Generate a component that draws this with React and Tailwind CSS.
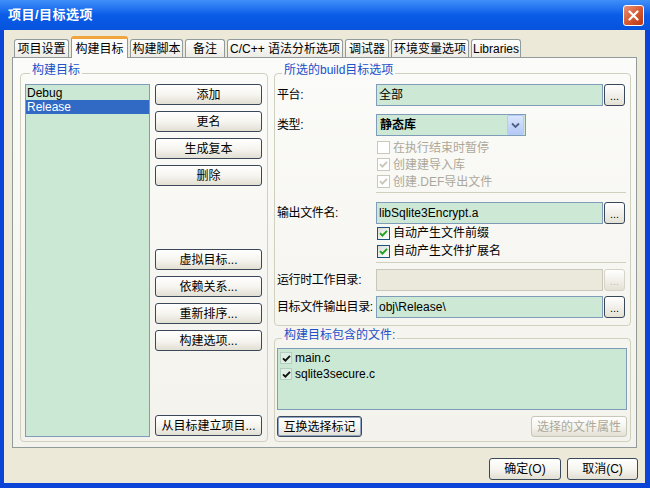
import React from "react";

const tabs = [
  { label: "项目设置", w: "w-[55px]" },
  { label: "构建目标", w: "w-[57px]", active: true },
  { label: "构建脚本", w: "w-[53px]" },
  { label: "备注", w: "w-[40px]" },
  { label: "C/C++ 语法分析选项", w: "w-[116px]" },
  { label: "调试器", w: "w-[44px]" },
  { label: "环境变量选项", w: "w-[78px]" },
  { label: "Libraries", w: "w-[50px]" },
];

const Btn = ({ children, className = "", disabled, isDefault }) => (
  <button
    className={`h-[21px] rounded-[3px] border text-[12px] leading-none flex items-center justify-center bg-linear-to-b from-white via-[#f6f5f0] to-[#e2dfd3] ${
      disabled ? "border-[#c9c7ba] text-[#aca899]" : "border-[#3a4859] text-black"
    } ${isDefault ? "ring-1 ring-inset ring-[#8ea4c4]" : ""} ${className}`}
  >
    {children}
  </button>
);

const Browse = ({ disabled }) => (
  <button
    className={`ml-[1px] w-[21px] h-[22px] rounded-[3px] border flex items-end justify-center pb-[3px] text-[11px] leading-none bg-linear-to-b from-white to-[#e4e1d5] ${
      disabled ? "border-[#d6d4c8] text-[#c0bfb2]" : "border-[#3a4859] text-black"
    }`}
  >
    ...
  </button>
);

const Check = ({ checked, disabled }) => (
  <span
    className={`w-[13px] h-[13px] shrink-0 border flex items-center justify-center ${
      disabled
        ? "border-[#cac8bb] bg-white"
        : "border-[#1c5180] bg-linear-to-br from-[#dcdcd7] to-white"
    }`}
  >
    {checked && (
      <svg width="9" height="9" viewBox="0 0 9 9">
        <path
          d="M1 4.2 L3.4 6.6 L8 1.8"
          fill="none"
          stroke={disabled ? "#c9c7ba" : "#21a121"}
          strokeWidth="1.9"
        />
      </svg>
    )}
  </span>
);

const CheckRow = ({ label, checked, disabled, h }) => (
  <div className={`flex items-center gap-[3px] ml-[100px] ${h}`}>
    <Check checked={checked} disabled={disabled} />
    <span className={disabled ? "text-[#aca899]" : "text-black"}>{label}</span>
  </div>
);

const Row = ({ label, children, className = "" }) => (
  <div className={`flex items-center h-[22px] ${className}`}>
    <span className="w-[99px] shrink-0 whitespace-nowrap tracking-[-0.4px]">{label}</span>
    {children}
  </div>
);

const Field = ({ value, disabled }) => (
  <div
    className={`w-[227px] h-[22px] border flex items-center px-[2px] ${
      disabled ? "bg-[#ebe9dc] border-[#c9c7ba]" : "bg-[#cde9d6] border-[#7f9db9]"
    }`}
  >
    {value}
  </div>
);

const Legend = ({ children }) => (
  <legend className="ml-[5px] px-[2px] pb-[6px] leading-[14px] text-[#2050c8]">
    {children}
  </legend>
);

export default function App() {
  return (
    <div className="w-[650px] h-[488px] flex flex-col bg-[#0b45d8] font-['Liberation_Sans','Noto_Sans_CJK_SC',sans-serif] text-[12px] text-black">
      {/* title bar */}
      <div className="h-[30px] shrink-0 flex items-center justify-between pl-[8px] pr-[6px] bg-linear-to-b from-[#3f8ff8] via-[#0a5ce8] to-[#0653dd]">
        <span className="text-white font-bold text-[13px] tracking-[0.5px]">项目/目标选项</span>
        <div className="w-[21px] h-[21px] rounded-[3px] border border-white flex items-center justify-center bg-linear-to-br from-[#e8937a] via-[#d65a32] to-[#b8360e]">
          <svg width="11" height="11" viewBox="0 0 11 11">
            <path d="M1.5 1.5 L9.5 9.5 M9.5 1.5 L1.5 9.5" stroke="white" strokeWidth="2.2" strokeLinecap="round" />
          </svg>
        </div>
      </div>

      {/* body */}
      <div className="flex-1 ml-[4px] mr-[5px] mb-[5px] bg-[#ece9d8] flex flex-col pt-[6px]">
        {/* tabs */}
        <div className="ml-[10px] flex items-end gap-[2px] h-[21px] relative z-10">
          {tabs.map((t) =>
            t.active ? (
              <div
                key={t.label}
                className={`${t.w} h-[22px] -mb-[1px] rounded-t-[3px] border-x border-[#919b9c] border-t-[3px] border-t-[#f0a43c] bg-[#fbfbf9] flex items-center justify-center`}
              >
                {t.label}
              </div>
            ) : (
              <div
                key={t.label}
                className={`${t.w} h-[18px] pt-[1px] rounded-t-[3px] border border-b-0 border-[#919b9c] bg-linear-to-b from-white to-[#ecebe5] flex items-center justify-center`}
              >
                {t.label}
              </div>
            )
          )}
        </div>

        {/* panel */}
        <div className="ml-[8px] w-[625px] h-[391px] border border-[#919b9c] bg-linear-to-b from-[#fbfbf9] to-[#f3f2ec] flex pt-[5px] pb-[5px] pl-[7px] gap-[6px]">
          {/* left group */}
          <fieldset className="w-[248px] border border-[#d0d0bf] rounded-[4px] pl-[4px] pr-[4px] pt-[1px]">
            <Legend>构建目标</Legend>
            <div className="flex gap-[5px]">
              <div className="w-[125px] h-[353px] border border-[#7f9db9] bg-[#cbe8d4] pt-[1px]">
                <div className="h-[14px] leading-[14px] px-[1px]">Debug</div>
                <div className="h-[14px] leading-[14px] px-[1px] bg-[#316ac5] text-white">Release</div>
              </div>
              <div className="w-[107px] h-[353px] flex flex-col">
                <div className="flex flex-col gap-[6px]">
                  <Btn>添加</Btn>
                  <Btn>更名</Btn>
                  <Btn>生成复本</Btn>
                  <Btn>删除</Btn>
                </div>
                <div className="flex flex-col gap-[6px] mt-[63px]">
                  <Btn>虚拟目标...</Btn>
                  <Btn>依赖关系...</Btn>
                  <Btn>重新排序...</Btn>
                  <Btn>构建选项...</Btn>
                </div>
                <Btn className="mt-auto mb-[1px]">从目标建立项目...</Btn>
              </div>
            </div>
          </fieldset>

          {/* right column */}
          <div className="w-[357px] flex flex-col">
            <fieldset className="border border-[#d0d0bf] rounded-[4px] pl-[2px] pt-[1px] pb-[7px]">
              <Legend>所选的build目标选项</Legend>
              <Row label="平台:">
                <Field value="全部" />
                <Browse />
              </Row>
              <Row label="类型:" className="mt-[8px]">
                <div className="w-[150px] h-[22px] border border-[#7f9db9] bg-[#cde9d6] flex items-center">
                  <span className="flex-1 px-[3px] font-bold">静态库</span>
                  <span className="w-[17px] h-[20px] mr-[1px] rounded-[2px] border border-[#b6cbf4] bg-linear-to-b from-[#dbe6fd] to-[#b4c9f6] flex items-center justify-center">
                    <svg width="9" height="7" viewBox="0 0 9 7">
                      <path d="M1 1.5 L4.5 5 L8 1.5" fill="none" stroke="#4d6185" strokeWidth="1.8" />
                    </svg>
                  </span>
                </div>
              </Row>
              <div className="mt-[3px]">
                <CheckRow label="在执行结束时暂停" disabled h="h-[17px]" />
                <CheckRow label="创建建导入库" disabled checked h="h-[17px]" />
                <CheckRow label="创建.DEF导出文件" disabled checked h="h-[17px]" />
              </div>
              <div className="ml-[99px] w-[250px] mt-[2px] border-t border-[#d0d0bf]" />
              <Row label="输出文件名:" className="mt-[9px]">
                <Field value="libSqlite3Encrypt.a" />
                <Browse />
              </Row>
              <CheckRow label="自动产生文件前缀" checked h="h-[18px]" />
              <CheckRow label="自动产生文件扩展名" checked h="h-[18px]" />
              <div className="ml-[99px] w-[250px] mt-[2px] border-t border-[#d0d0bf]" />
              <Row label="运行时工作目录:" className="mt-[6px]">
                <Field value="" disabled />
                <Browse disabled />
              </Row>
              <Row label="目标文件输出目录:" className="mt-[5px]">
                <Field value="obj\Release\" />
                <Browse />
              </Row>
            </fieldset>

            <fieldset className="mt-[2px] flex-1 border border-[#d0d0bf] rounded-[4px] pl-[2px] pr-[3px]">
              <Legend>构建目标包含的文件:</Legend>
              <div className="h-[62px] border border-[#7f9db9] bg-[#cbe8d4] pt-[1px]">
                {["main.c", "sqlite3secure.c"].map((f) => (
                  <div key={f} className="h-[16px] flex items-center gap-[3px] pl-[2px]">
                    <span className="w-[12px] h-[12px] border border-[#b5cdbc] bg-[#dcefe2] flex items-center justify-center">
                      <svg width="9" height="9" viewBox="0 0 9 9">
                        <path d="M1 4.3 L3.4 6.7 L8 1.8" fill="none" stroke="#111" strokeWidth="1.9" />
                      </svg>
                    </span>
                    <span>{f}</span>
                  </div>
                ))}
              </div>
              <div className="mt-[6px] flex justify-between">
                <Btn isDefault className="w-[85px] border-[#1f2d40]">互换选择标记</Btn>
                <Btn disabled className="w-[96px]">选择的文件属性</Btn>
              </div>
            </fieldset>
          </div>
        </div>

        {/* dialog buttons */}
        <div className="mt-[10px] flex justify-end gap-[6px] pr-[7px]">
          <Btn className="w-[72px] h-[22px]">确定(O)</Btn>
          <Btn className="w-[71px] h-[22px]">取消(C)</Btn>
        </div>
      </div>
    </div>
  );
}
